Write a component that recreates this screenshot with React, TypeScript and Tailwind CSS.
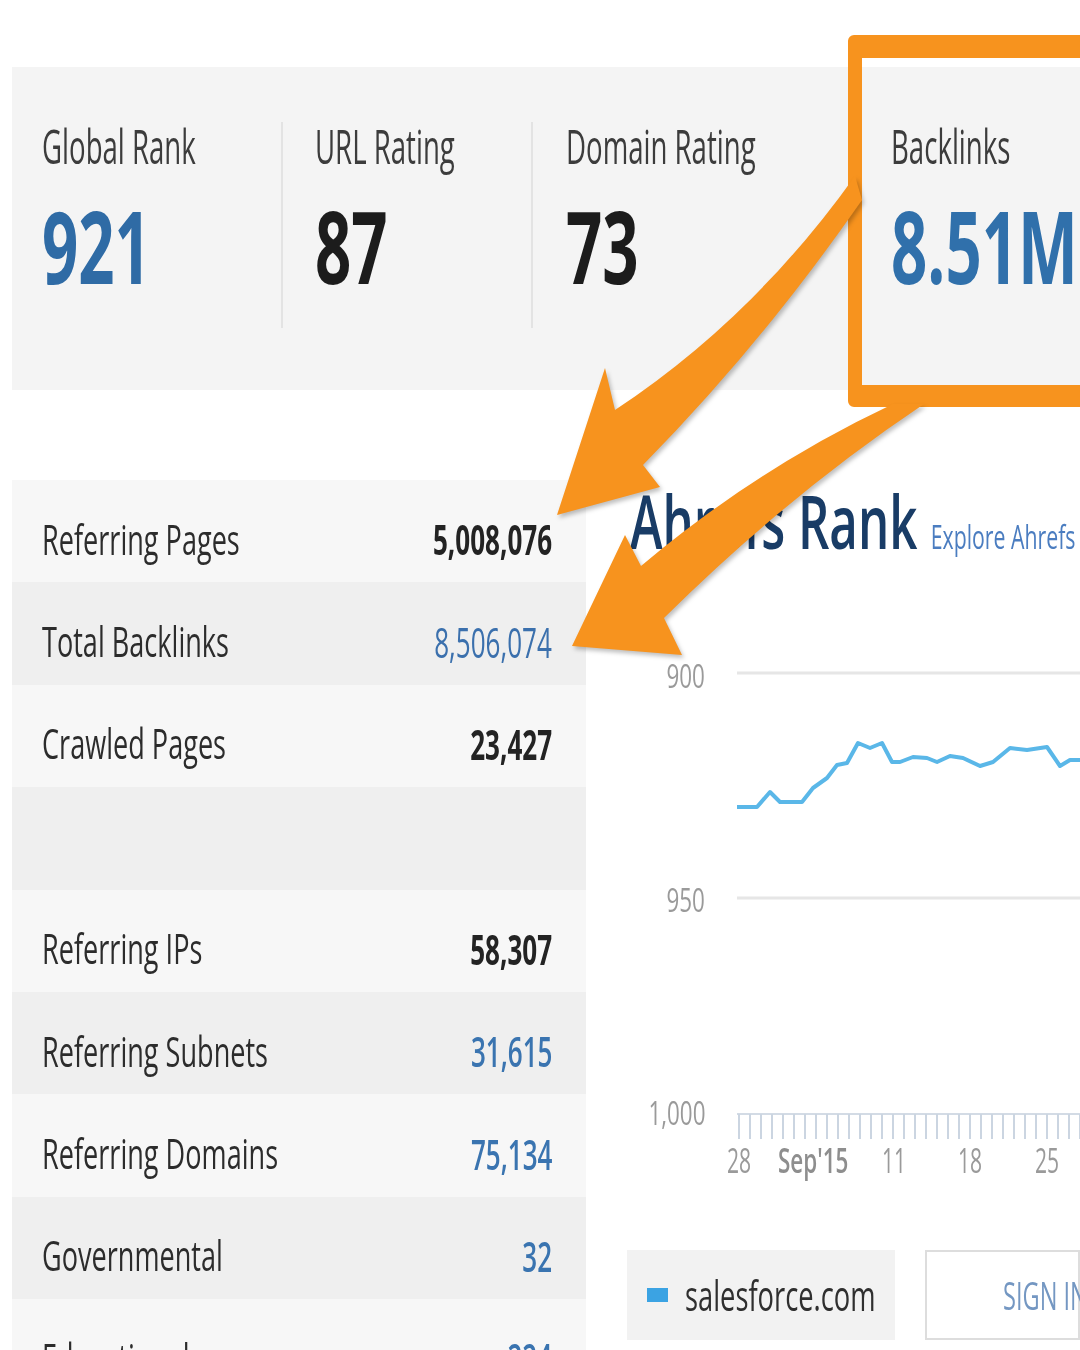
import clsx from "clsx";

type Tone = "dark" | "link" | "blue";

interface Row {
  label: string;
  value: string;
  tone?: Tone;
}

const rows: Row[] = [
  { label: "Referring Pages", value: "5,008,076", tone: "dark" },
  { label: "Total Backlinks", value: "8,506,074", tone: "link" },
  { label: "Crawled Pages", value: "23,427", tone: "dark" },
  { label: "", value: "" },
  { label: "Referring IPs", value: "58,307", tone: "dark" },
  { label: "Referring Subnets", value: "31,615", tone: "blue" },
  { label: "Referring Domains", value: "75,134", tone: "blue" },
  { label: "Governmental", value: "32", tone: "blue" },
  { label: "Educational", value: "224", tone: "blue" },
];

// rank history, in chart pixels (x from left of plot, y from top of plot)
const rankLine = [
  [0, 157], [20, 157], [33, 142], [43, 152], [65, 152], [76, 138], [90, 128],
  [100, 115], [110, 113], [121, 93], [133, 98], [145, 93], [155, 112], [163, 112],
  [176, 107], [190, 108], [200, 112], [213, 106], [226, 108], [243, 116], [256, 112],
  [273, 98], [290, 100], [310, 97], [323, 116], [333, 110], [343, 110],
];

const ticks = Array.from({ length: 32 }).map((_, i) => 2 + i * 11);

// the screenshot is squeezed sideways, so every text run gets narrowed with scale-x
function Sq({ children, className }: { children: React.ReactNode; className?: string }) {
  return (
    <span className={clsx("inline-block whitespace-nowrap", className)}>{children}</span>
  );
}

function Stat({
  label,
  value,
  valueClass,
  className,
}: {
  label: string;
  value: string;
  valueClass: string;
  className: string;
}) {
  return (
    <div className={clsx("mt-[55px] flex h-[206px] flex-col", className)}>
      <Sq className="origin-left scale-x-[0.575] text-[48px] font-medium leading-[48px] text-[#3c3c3c]">{label}</Sq>
      <Sq className={clsx("mt-[25px] origin-left scale-x-[0.635] text-[100px] font-bold leading-[100px]", valueClass)}>
        {value}
      </Sq>
    </div>
  );
}

function Arrows() {
  return (
    <svg
      className="pointer-events-none absolute left-0 top-0 drop-shadow-[2px_3px_2px_rgba(0,0,0,0.25)]"
      width="1080"
      height="1350"
      viewBox="0 0 1080 1350"
    >
      <path
        d="M855 176 Q754 318 615 410 L605 368 L557 515 L660 487 L643 465 Q763 343 862 200 Z"
        fill="#f7931e"
      />
      <path
        d="M893 404 Q757 468 641 566 L625 535 L572 646 L682 655 L664 618 Q788 495 924 404 Z"
        fill="#f7931e"
      />
    </svg>
  );
}

export default function App() {
  return (
    <div className="relative h-[1350px] w-[1080px] overflow-hidden bg-white font-['Open_Sans',sans-serif]">
      <section className="ml-[12px] mt-[67px] flex h-[323px] bg-[#f4f4f4]">
        <Stat
          label="Global Rank"
          value="921"
          valueClass="text-[#2f6ba5]"
          className="w-[271px] shrink-0 border-r-2 border-[#e3e3e3] pl-[30px]"
        />
        <Stat
          label="URL Rating"
          value="87"
          valueClass="text-[#1c1c1c]"
          className="w-[250px] shrink-0 border-r-2 border-[#e3e3e3] pl-[32px]"
        />
        <Stat label="Domain Rating" value="73" valueClass="text-[#1c1c1c]" className="w-[315px] shrink-0 pl-[33px]" />
        <Stat label="Backlinks" value="8.51M" valueClass="text-[#3070ab]" className="min-w-0 flex-1 pl-[43px]" />
      </section>

      <div className="mt-[90px] flex">
        <div className="ml-[12px] w-[574px] shrink-0">
          {rows.map((r, i) => (
            <div
              key={i}
              className={clsx(
                "flex h-[102.4px] items-center pl-[30px] pr-[34px] pt-[16px]",
                i % 2 === 0 ? "bg-[#f7f7f7]" : "bg-[#efefef]"
              )}
            >
              <div className="w-0 flex-1">
                <Sq className="origin-left scale-x-[0.645] text-[42px] font-medium leading-[42px] text-[#2c2c2c]">
                  {r.label}
                </Sq>
              </div>
              <Sq
                className={clsx(
                  "shrink-0 origin-right scale-x-[0.62] text-[42px] leading-[42px]",
                  r.tone === "dark" && "font-bold text-[#232323]",
                  r.tone === "link" && "font-normal text-[#3b70ad]",
                  r.tone === "blue" && "font-semibold text-[#3a74b0]"
                )}
              >
                {r.value}
              </Sq>
            </div>
          ))}
        </div>

        <div className="ml-[41px] min-w-0 flex-1">
          <div className="ml-[3px] mt-[4px] h-[74px]">
            <Sq className="origin-left scale-x-[0.665] text-[74px] font-semibold leading-[74px] text-[#193c66]">
              Ahrefs Rank
              <span className="ml-[20px] text-[32px] font-normal text-[#4b7dc0]">Explore Ahrefs Rank</span>
            </Sq>
          </div>

          <div className="mt-[92px] flex h-[490px]">
            <div className="flex w-[78px] shrink-0 flex-col items-end text-[32px] leading-[36px] text-[#9a9a9a]">
              <Sq className="mt-[8px] origin-right scale-x-[0.7]">900</Sq>
              <Sq className="mt-[188px] origin-right scale-x-[0.7]">950</Sq>
              <Sq className="mt-[177px] origin-right scale-x-[0.7]">1,000</Sq>
            </div>
            <svg className="ml-[32px] shrink-0" width="343" height="490" viewBox="0 0 343 490">
              <line x1="0" y1="23" x2="343" y2="23" stroke="#e6e6e6" strokeWidth="3" />
              <line x1="0" y1="248" x2="343" y2="248" stroke="#e6e6e6" strokeWidth="3" />
              <line x1="0" y1="464" x2="343" y2="464" stroke="#d3dbe5" strokeWidth="2" />
              {ticks.map((x) => (
                <line key={x} x1={x} y1="464" x2={x} y2="489" stroke="#cbd5e1" strokeWidth="2" />
              ))}
              <polyline
                points={rankLine.map((p) => p.join(",")).join(" ")}
                fill="none"
                stroke="#5ab7e8"
                strokeWidth="4"
                strokeLinejoin="round"
              />
            </svg>
          </div>

          <div className="flex h-[40px] pl-[100px] text-[34px] leading-[40px] text-[#9a9a9a]">
            <div className="w-[51px] shrink-0"><Sq className="origin-left scale-x-[0.62]">28</Sq></div>
            <div className="w-[104px] shrink-0"><Sq className="origin-left scale-x-[0.66] font-semibold text-[#8e8e8e]">Sep'15</Sq></div>
            <div className="w-[76px] shrink-0"><Sq className="origin-left scale-x-[0.62]">11</Sq></div>
            <div className="w-[77px] shrink-0"><Sq className="origin-left scale-x-[0.62]">18</Sq></div>
            <div><Sq className="origin-left scale-x-[0.62]">25</Sq></div>
          </div>

          <div className="mt-[70px] flex h-[90px]">
            <div className="flex w-[268px] shrink-0 items-center bg-[#f2f2f2] pl-[20px]">
              <span className="h-[14px] w-[21px] shrink-0 bg-[#3ba3e3]" />
              <div className="ml-[17px] w-0 flex-1">
                <Sq className="origin-left scale-x-[0.65] text-[42px] font-medium leading-[42px] text-[#2f2f2f]">
                  salesforce.com
                </Sq>
              </div>
            </div>
            <div className="ml-[30px] flex min-w-0 flex-1 items-center border-2 border-[#dddddd] bg-white pl-[76px]">
              <Sq className="origin-left scale-x-[0.62] text-[38px] leading-[38px] text-[#7497c2]">SIGN IN</Sq>
            </div>
          </div>
        </div>
      </div>

      <div className="absolute left-[848px] top-[35px] h-[372px] w-[260px] rounded-[6px] border-b-[22px] border-l-[14px] border-r-[14px] border-t-[23px] border-[#f7931e]" />
      <Arrows />
    </div>
  );
}
